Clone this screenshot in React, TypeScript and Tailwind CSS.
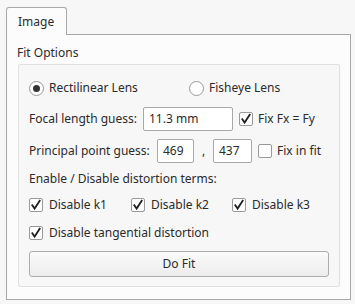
import React from "react";

const Check = ({ checked }: { checked: boolean }) => (
  <span className="w-[14px] h-[14px] border border-[#9a9a9a] rounded-[2px] bg-white flex items-center justify-center shrink-0">
    {checked && (
      <svg width="12" height="12" viewBox="0 0 12 12">
        <path d="M2.3 6.2 L4.6 9.6 L9.7 1.8" fill="none" stroke="#202020" strokeWidth="1.8" strokeLinecap="square" strokeLinejoin="miter" />
      </svg>
    )}
  </span>
);

const Radio = ({ checked }: { checked: boolean }) => (
  <span className="w-[15px] h-[15px] rounded-full border border-[#9a9a9a] bg-white flex items-center justify-center shrink-0">
    {checked && <span className="w-[7px] h-[7px] rounded-full bg-[#333]" />}
  </span>
);

export default function App() {
  return (
    <div
      className="w-[355px] h-[304px] bg-[#f7f7f7] pt-[7px] pl-[6px] text-[12px] text-[#2b2b2b] whitespace-nowrap"
      style={{ fontFamily: '"Noto Sans", "Open Sans", sans-serif' }}
    >
      <div className="relative z-10 w-[61px] h-[28px] -mb-px border border-b-0 border-[#a8a8a8] rounded-t-[3px] bg-[#fcfcfc] flex items-center pl-[11px] text-[12px]">
        Image
      </div>
      <div className="w-[345px] h-[266px] border border-[#a8a8a8] bg-[#fcfcfc] pl-[11px] pt-[9px]">
        <div className="leading-[18px] h-[20px] -ml-px">Fit Options</div>
        <div className="w-[322px] h-[223px] border border-[#e0e0e0] rounded-[2px] bg-[#f7f7f7] pl-[10px] pr-[10px] pt-[13px]">
          <div className="flex items-center h-[20px]">
            <div className="flex items-center gap-[5px] w-[160px] shrink-0">
              <Radio checked={true} />
              <span>Rectilinear Lens</span>
            </div>
            <div className="flex items-center gap-[5px]">
              <Radio checked={false} />
              <span>Fisheye Lens</span>
            </div>
          </div>
          <div className="flex items-center h-[24px] mt-[9px]">
            <span className="w-[114px] shrink-0">Focal length guess:</span>
            <div className="w-[90px] h-[24px] shrink-0 border border-[#a8a8a8] rounded-[2px] bg-white flex items-center pl-[5px]">11.3 mm</div>
            <div className="flex items-center gap-[5px] ml-[6px]">
              <Check checked={true} />
              <span>Fix Fx = Fy</span>
            </div>
          </div>
          <div className="flex items-center h-[24px] mt-[8px]">
            <span className="w-[128px] shrink-0">Principal point guess:</span>
            <div className="w-[37px] h-[24px] shrink-0 border border-[#a8a8a8] rounded-[2px] bg-white flex items-center pl-[5px]">469</div>
            <span className="w-[19px] shrink-0 text-center">,</span>
            <div className="w-[39px] h-[24px] shrink-0 border border-[#a8a8a8] rounded-[2px] bg-white flex items-center pl-[5px]">437</div>
            <div className="flex items-center gap-[5px] ml-[6px]">
              <Check checked={false} />
              <span>Fix in fit</span>
            </div>
          </div>
          <div className="h-[20px] flex items-center mt-[6px]">Enable / Disable distortion terms:</div>
          <div className="flex items-center h-[20px] mt-[6px]">
            <div className="flex items-center gap-[6px] w-[102px] shrink-0">
              <Check checked={true} />
              <span>Disable k1</span>
            </div>
            <div className="flex items-center gap-[6px] w-[101px] shrink-0">
              <Check checked={true} />
              <span>Disable k2</span>
            </div>
            <div className="flex items-center gap-[6px]">
              <Check checked={true} />
              <span>Disable k3</span>
            </div>
          </div>
          <div className="flex items-center h-[20px] mt-[8px]">
            <div className="flex items-center gap-[6px]">
              <Check checked={true} />
              <span>Disable tangential distortion</span>
            </div>
          </div>
          <button className="mt-[8px] w-[300px] h-[26px] border border-[#adadad] rounded-[3px] bg-gradient-to-b from-[#fbfbfb] to-[#ececec] flex items-center justify-center text-[12px] text-[#2b2b2b]">
            Do Fit
          </button>
        </div>
      </div>
    </div>
  );
}
